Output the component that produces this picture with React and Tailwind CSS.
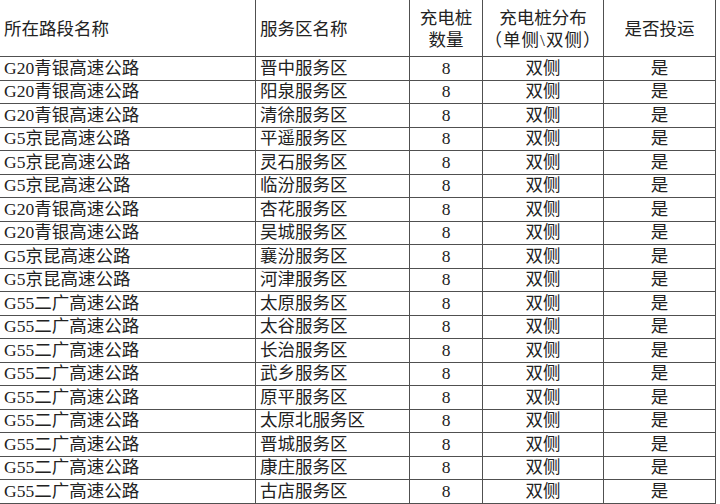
import React from "react";

const rows = [
  ["G20青银高速公路", "晋中服务区"],
  ["G20青银高速公路", "阳泉服务区"],
  ["G20青银高速公路", "清徐服务区"],
  ["G5京昆高速公路", "平遥服务区"],
  ["G5京昆高速公路", "灵石服务区"],
  ["G5京昆高速公路", "临汾服务区"],
  ["G20青银高速公路", "杏花服务区"],
  ["G20青银高速公路", "吴城服务区"],
  ["G5京昆高速公路", "襄汾服务区"],
  ["G5京昆高速公路", "河津服务区"],
  ["G55二广高速公路", "太原服务区"],
  ["G55二广高速公路", "太谷服务区"],
  ["G55二广高速公路", "长治服务区"],
  ["G55二广高速公路", "武乡服务区"],
  ["G55二广高速公路", "原平服务区"],
  ["G55二广高速公路", "太原北服务区"],
  ["G55二广高速公路", "晋城服务区"],
  ["G55二广高速公路", "康庄服务区"],
  ["G55二广高速公路", "古店服务区"],
];

const cell = "border-r border-b border-[#505050] flex items-center";

export default function App() {
  return (
    <div
      className="w-[720px] h-[504px] bg-white overflow-hidden text-[#222] text-[17.5px] leading-none"
      style={{ fontFamily: '"Liberation Serif", "Noto Sans CJK SC", serif' }}
    >
      <div className="grid grid-cols-[256px_154px_73px_121px_112px] grid-rows-[57px] auto-rows-[23.5px] w-[716px]">
        <div className={`${cell} pl-[4px] pt-[4px]`}>所在路段名称</div>
        <div className={`${cell} pl-[4px] pt-[4px]`}>服务区名称</div>
        <div className={`${cell} flex-col justify-center gap-[4px] pt-[3px]`}>
          <span>充电桩</span>
          <span>数量</span>
        </div>
        <div className={`${cell} flex-col justify-center gap-[4px] pt-[3px]`}>
          <span>充电桩分布</span>
          <span className="tracking-[1px]">（单侧\双侧）</span>
        </div>
        <div className={`${cell} justify-center pt-[4px]`}>是否投运</div>
        {rows.map(([road, area], i) => (
          <React.Fragment key={i}>
            <div className={`${cell} pl-[4px]`}>{road}</div>
            <div className={`${cell} pl-[4px]`}>{area}</div>
            <div className={`${cell} justify-center`}>8</div>
            <div className={`${cell} justify-center`}>双侧</div>
            <div className={`${cell} justify-center`}>是</div>
          </React.Fragment>
        ))}
      </div>
    </div>
  );
}
